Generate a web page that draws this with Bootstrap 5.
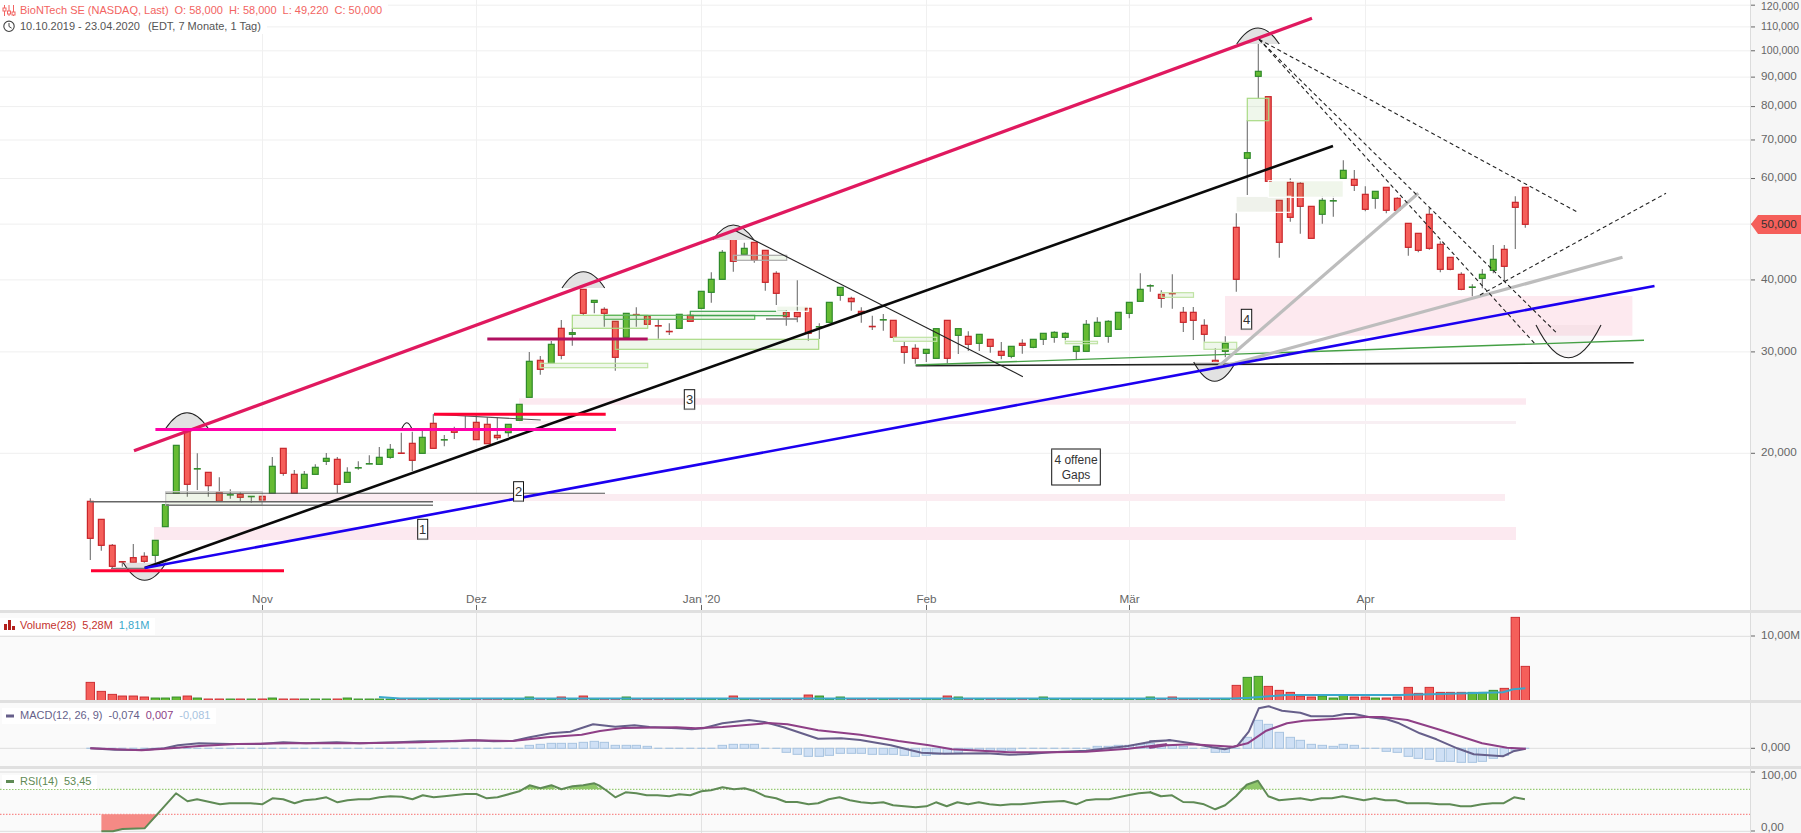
<!DOCTYPE html>
<html lang="de">
<head>
<meta charset="utf-8">
<title>BioNTech SE Chart</title>
<link href="https://cdn.jsdelivr.net/npm/bootstrap@5.3.0/dist/css/bootstrap.min.css" rel="stylesheet">
<style>
html,body{margin:0;height:833px;overflow:hidden;background:#fff;font-family:"Liberation Sans",Arial,sans-serif;font-size:11px}
.stage{width:1801px;height:833px}
.pane-main{height:610px}
.pane-vol{height:90px}
.pane-macd{height:66px}
.pane-rsi{height:67px}
.pane-sep{border-top:3px solid #e0e0e0}
.plot{width:1750px;height:100%;display:block;flex:none;background:#fff}
.plot-low{background:#fafafa}
.yaxis{width:51px;height:100%;display:block;flex:none;background:#f6f6f6}
svg text{font-family:"Liberation Sans",Arial,sans-serif;font-size:11.7px;fill:#666}
svg text.tag{font-size:13px;fill:#333}
svg text.note{font-size:12px;fill:#333}
.legend-box{position:absolute;background:#fff;white-space:nowrap;padding-right:6px}
.legend-box span+span{margin-left:6px}
.lg-red{color:#f26462}
.lg-grey{color:#555}
.legend-box span.lg-wide{margin-left:8px}
.lg-vol{color:#c4332e}
.lg-teal{color:#3aa8cc}
.lg-macd{color:#665f8a}
.lg-sig{color:#8e3f86}
.lg-hist{color:#a8c4e0}
.lg-rsi{color:#5f8a55}
.lg-ico{width:20px;flex:none}
.lg-ico-s{width:18px;flex:none}
.lg-top1{left:0;top:0;height:18px;line-height:20px}
.lg-top2{left:0;top:18px;height:16px;line-height:16px}
.lg-volpos{left:0;top:5px;height:17px;line-height:15px}
.lg-macdpos{left:2px;top:5px;height:16px;line-height:15px}
.lg-rsipos{left:2px;top:6px;height:14px;line-height:12px}
</style>
</head>
<body>
<div class="stage d-flex flex-column">
  <div class="pane-main d-flex position-relative">
    <svg id="pMain" class="plot" viewBox="0 0 1750 610"></svg>
    <svg id="aMain" class="yaxis" viewBox="1750 0 51 610"></svg>
    <div class="legend-box lg-top1 d-flex lg-red">
      <svg class="lg-ico" width="20" height="18" viewBox="0 0 20 18"><g stroke="#f26462" fill="#fff" stroke-width="1"><path d="M4.5 5v11M9 5v11M13.5 5v11" fill="none"/><rect x="3" y="8" width="3" height="3"/><rect x="7.5" y="11" width="3" height="3"/><rect x="12" y="12" width="3" height="3"/></g></svg>
      <span>BioNTech SE (NASDAQ, Last)</span><span>O: 58,000</span><span>H: 58,000</span><span>L: 49,220</span><span>C: 50,000</span>
    </div>
    <div class="legend-box lg-top2 d-flex lg-grey">
      <svg class="lg-ico" width="20" height="16" viewBox="0 0 20 16"><circle cx="9" cy="8.3" r="5.2" fill="none" stroke="#444" stroke-width="1.1"/><path d="M9 5v3.5l2.6 1.6" fill="none" stroke="#444" stroke-width="1"/></svg>
      <span>10.10.2019 - 23.04.2020</span><span class="lg-wide">(EDT, 7 Monate, 1 Tag)</span>
    </div>
  </div>
  <div class="pane-vol pane-sep d-flex position-relative">
    <svg id="pVol" class="plot plot-low" viewBox="0 613 1750 87"></svg>
    <svg id="aVol" class="yaxis" viewBox="1750 613 51 87"></svg>
    <div class="legend-box lg-volpos d-flex lg-vol">
      <svg class="lg-ico" width="20" height="15" viewBox="0 0 20 15"><g fill="#b3201c"><rect x="4" y="6" width="3" height="6"/><rect x="8" y="2" width="3" height="10"/><rect x="12" y="8" width="3" height="4"/></g></svg>
      <span>Volume(28)</span><span>5,28M</span><span class="lg-teal">1,81M</span>
    </div>
  </div>
  <div class="pane-macd pane-sep d-flex position-relative">
    <svg id="pMacd" class="plot plot-low" viewBox="0 703 1750 63"></svg>
    <svg id="aMacd" class="yaxis" viewBox="1750 703 51 63"></svg>
    <div class="legend-box lg-macdpos d-flex lg-macd">
      <svg class="lg-ico-s" width="18" height="15" viewBox="0 0 18 15"><rect x="4" y="6.5" width="8" height="3" fill="#665f8a"/></svg>
      <span>MACD(12, 26, 9)</span><span>-0,074</span><span class="lg-sig">0,007</span><span class="lg-hist">-0,081</span>
    </div>
  </div>
  <div class="pane-rsi pane-sep d-flex position-relative">
    <svg id="pRsi" class="plot plot-low" viewBox="0 769 1750 64"></svg>
    <svg id="aRsi" class="yaxis" viewBox="1750 769 51 64"></svg>
    <div class="legend-box lg-rsipos d-flex lg-rsi">
      <svg class="lg-ico-s" width="18" height="14" viewBox="0 0 18 14"><rect x="4" y="5" width="8" height="3" fill="#5f8a55"/></svg>
      <span>RSI(14)</span><span>53,45</span>
    </div>
  </div>
</div>
<script src="https://cdn.jsdelivr.net/npm/bootstrap@5.3.0/dist/js/bootstrap.bundle.min.js"></script>
<script>
const R='r',G='g';
const blocks=[
[400,[[295,304,415,480,R],[357,358,436,452,R],[432,436,499,505,R],[483,484,487,500,R],[432,473,487,505,R],[457,469,484,505,R],[421,421,466,490,G],[314,314,380,380,G],[136,136,280,280,G],[90,90,253,290,R],[160,205,208,270,G],[217,217,257,290,R],[232,277,304,304,R],[268,283,286,296,G],[277,283,292,305,R],[289,289,290,308,G],[289,289,300,318,R],[171,199,280,280,G],[145,145,220,227,R],[210,223,280,280,R],[213,223,265,265,G],[193,202,223,223,G],[159,175,184,195,G],[171,178,253,280,R],[202,217,247,247,G],[184,202,205,209,G],[166,190,193,193,G],[141,172,193,193,G],[132,148,172,176,G],[98,159,160,160,R],[95,130,181,213,R],[93,112,160,160,G],[43,70,145,145,R],[105,118,121,139,G],[80,90,97,117,R]]],
[300,[[348,387,390,390,G],[345,367,419,419,R],[352,373,431,431,R],[352,406,413,420,R],[373,373,398,410,G],[313,313,361,361,G]]],
[220,[[396,424,532,532,G],[408,421,448,464,R],[363,373,430,430,G],[300,325,406,418,R],[325,338,343,377,G],[208,208,280,285,R],[241,241,247,280,G],[262,268,280,320,R],[304,304,412,452,R],[280,280,352,352,G],[262,283,285,320,R],[285,289,313,313,R],[298,316,319,356,R],[310,334,335,345,R],[283,283,325,325,G],[283,286,304,304,R],[214,214,265,268,G],[157,178,217,248,G],[90,97,178,178,G],[40,52,124,155,R],[68,85,103,103,G],[67,67,121,128,R],[91,91,187,212,R],[154,160,220,255,R],[270,277,290,317,R],[181,277,290,307,R],[265,265,340,362,R],[310,319,322,357,G],[247,247,307,310,G]]],
[150,[[412,412,436,452,G],[440,445,455,482,R],[472,484,490,518,R],[497,529,530,540,R],[492,508,511,542,G],[511,511,562,562,R],[575,590,607,641,R],[583,595,625,641,R],[598,598,610,636,G],[536,536,625,625,G],[511,511,625,640,R],[536,536,556,612,G],[544,559,583,603,R],[553,553,580,603,G],[568,568,589,608,R],[576,604,616,628,R],[589,589,619,625,G],[568,580,586,611,R],[568,568,592,595,G],[550,550,568,585,G],[544,547,562,578,G],[547,550,562,571,G],[589,589,604,628,G],[510,523,604,604,G],[502,517,559,559,G],[511,514,559,578,G],[487,487,538,538,G],[457,457,490,505,G],[370,418,454,454,G],[403,406,409,425,G],[421,433,445,473,R],[373,430,431,476,R]]],
[250,[[171,187,217,246,R],[171,187,211,270,R],[208,226,253,275,R],[295,331,343,343,R],[259,280,304,322,G]]],
[20,[[580,622,778,815,R],[300,398,415,525,G],[60,154,169,235,G],[230,230,484,484,R],[541,541,667,713,R],[475,487,592,605,R],[487,490,559,641,R],[559,559,655,655,R],[530,541,583,611,G],[530,541,544,590,G],[421,451,475,475,G],[450,478,496,513,R],[499,523,568,574,R],[514,514,535,566,G],[502,502,571,580,R],[532,535,571,571,R],[610,610,682,707,R],[640,640,691,697,R],[565,583,685,689,R],[664,673,748,757,R],[712,712,748,751,R],[757,763,808,811,R],[793,801,802,829,G],[747,763,775,805,G],[675,718,751,760,G],[675,688,739,785,R],[529,547,562,687,R],[502,502,613,623,R]]]
];
const candles=[];
blocks.forEach(([y0,rows])=>rows.forEach(r=>candles.push([y0+r[0]/3,y0+r[1]/3,y0+r[2]/3,y0+r[3]/3,r[4]])));
const cx=i=>Math.round(90.3+10.709*i)+0.3;
const vlines=[262.5,476.5,701.5,926.5,1129.5,1365.5];
const FILL={r:'#f55f5a',g:'#66bb33'},STK={r:'#c8252a',g:'#2f8a2a'};
const L=(x1,y1,x2,y2,c,w,extra='')=>`<line x1="${x1}" y1="${y1}" x2="${x2}" y2="${y2}" stroke="${c}" stroke-width="${w}" ${extra}/>`;
const rect=(x,y,w,h,f,s='none',sw=1)=>`<rect x="${x}" y="${y}" width="${w}" height="${h}" fill="${f}" stroke="${s}" stroke-width="${sw}"/>`;
const poly=(pts,c,w)=>`<polyline points="${pts.map(p=>p[0].toFixed(1)+','+p[1].toFixed(1)).join(' ')}" fill="none" stroke="${c}" stroke-width="${w}" stroke-linejoin="round"/>`;
const pyY=p=>453.3-250.1*Math.log(p/20);
const axisLine=(y1,y2)=>L(1750.5,y1,1750.5,y2,'#dcdcdc',1);

/* ---- main pane ---- */
let m='';
[120,110,100,90,80,70,60,50,40,30,20].forEach(p=>{const y=pyY(p).toFixed(1);m+=L(0,y,1750,y,'#efefef',1)});
vlines.forEach(x=>m+=L(x,0,x,605,'#f0f0f0',1)+L(x,605,x,610,'#666',1));
/* pink gaps */
const pink='#fce9f0';
m+=rect(154,527,1362,13,pink)+rect(262,494,1243,7,'#fbecf1')+rect(519,398.3,1007,6.4,pink)+rect(519,421,997,3,'#f8eff3')+rect(1225,296,407.4,39.7,'#fde9ef');
/* candles */
candles.forEach((c,i)=>{const x=cx(i);
  m+=L(x,c[0],x,c[3],'#707070',1.1);
  const h=Math.max(c[2]-c[1],.4);
  if(h<1.6) m+=L(x-3.5,c[1]+h/2,x+3.5,c[1]+h/2,STK[c[4]],1.6);
  else m+=rect(x-2.9,c[1],5.8,h,FILL[c[4]],STK[c[4]],1.2);
});
/* gap boxes */
const gb=(x1,y1,x2,y2,s,f='rgba(110,180,70,.11)',w=1.2)=>rect(x1,y1,x2-x1,y2-y1,f,s,w);
const lg='#a9da84';
m+=gb(165.7,491.7,262.3,505.3,'#ccc','rgba(120,170,70,.12)');
m+=gb(572.3,315.3,647.7,328.3,lg)+gb(540.3,363.3,647.7,367.7,'#bfe3a3')+gb(615.3,339.3,818.7,349.3,lg)+gb(604.3,315.3,754.7,319.3,'#5ab35a')+gb(690.3,311.3,786.3,315.7,'#3da24d');
m+=gb(733.3,255.3,786.7,260.3,'#aaa')+gb(776.7,306,808.3,311.3,'#fff','rgba(110,180,70,.1)');
m+=gb(893.5,337.3,936.8,341.3,'#bfe3a3')+gb(1065.3,341.3,1097.5,343.7,'#bfe3a3')+gb(1161.4,292.7,1193.5,297.3,'#bfe3a3')+gb(1204,342.3,1236.7,349.3,'#bfe3a3');
m+=gb(1247.3,98.3,1268.7,120.7,lg)+gb(1236,196.3,1290.7,212.3,'#fff','rgba(120,150,90,.12)')+gb(1268.3,180.7,1343.3,197.3,'#fff','rgba(120,170,70,.11)');
/* arcs */
const arc=(x1,y,x2,yc,f='#e2e2e2')=>{const c=2*yc-y;return `<path d="M${x1} ${y}Q${(x1+x2)/2} ${c} ${x2} ${y}" fill="${f}" stroke="#222" stroke-width="1.1"/>`};
m+=arc(123.3,562.7,166,580.3)+arc(165.7,428.5,208.3,412.7)+arc(401.3,430,412.3,422.7,'none')+arc(562,288,604.7,271.7)+arc(712.7,240,754,225)+arc(1236.7,44,1279.3,28)+arc(1193.7,362,1235.7,381.3)+arc(1536,325,1601,357.7,'rgba(190,160,170,.09)');
/* horizontal grey lines */
m+=L(90,501.7,433,501.7,'#666',1.4)+L(165.7,505.3,433,505.3,'#777',1.4)+L(165.7,493.3,605,493.3,'#555',1.1)+L(433.6,414.3,540.7,420,'#555',1.1)+L(766,319,797,319,'#777',1.5)+L(111,568.5,145,568.5,'#777',1.5);
/* trend lines */
m+=L(915.7,365.6,1633.7,362.7,'#222',1.6)+L(915.7,365,1644,340.3,'#45a045',1.4)+L(734,230,1022.9,376.7,'#222',1.1);
m+=L(1216.4,368.3,1418.3,193.3,'#bdbdbd',3.2)+L(1216.4,368.3,1622.5,257.3,'#bdbdbd',3.2);
m+=L(144.7,568,1333,146,'#0a0a0a',2.6)+L(144.7,568,1654.5,286,'#1c00f0',2.6);
m+=L(134,450.7,1312,18.3,'#e0195f',3.3)+L(91,570.7,284,570.7,'#ff0033',3)+L(155.4,429.5,616,429.5,'#ff00a8',3)+L(434,414.3,605.7,414.3,'#ff0033',3)+L(487.3,339,647.7,339,'#b01060',3);
const dash='stroke-dasharray="4 3"';
m+=L(1259,39.3,1578.5,212.7,'#222',1.1,dash)+L(1259,39.3,1558,334.3,'#222',1.1,dash)+L(1259,39.3,1536,345,'#222',1.1,dash)+L(1480,295,1666,193.3,'#222',1.1,dash);
/* text boxes */
const tb=(x1,y1,x2,y2,t)=>rect(x1,y1,x2-x1,y2-y1,'#fff','#111',1)+L(x1,y2,x2,y2,'#888',1.5)+`<text class="tag" x="${(x1+x2)/2}" y="${(y1+y2)/2+4.6}" text-anchor="middle">${t}</text>`;
m+=tb(417.7,519.3,427.7,539.3,'1')+tb(513.6,481.7,523.5,501.3,'2')+tb(684.3,389.7,694.7,409.3,'3')+tb(1241.3,309.3,1251.7,329.3,'4');
m+=rect(1051.7,449,48.6,36,'#fff','#111',1)+L(1051.7,449,1100.3,449,'#888',1.5)+'<text class="note" x="1076" y="463.5" text-anchor="middle">4 offene</text><text class="note" x="1076" y="479" text-anchor="middle">Gaps</text>';
/* x labels */
[[262.5,'Nov'],[476.5,'Dez'],[701.5,"Jan '20"],[926.5,'Feb'],[1129.5,'Mär'],[1365.5,'Apr']].forEach(([x,t])=>m+=`<text x="${x}" y="603" text-anchor="middle">${t}</text>`);
pMain.innerHTML=m;
/* main axis */
let a=axisLine(0,610);
[[120,'120,000'],[110,'110,000'],[100,'100,000'],[90,'90,000'],[80,'80,000'],[70,'70,000'],[60,'60,000'],[50,''],[40,'40,000'],[30,'30,000'],[20,'20,000']].forEach(([p,t])=>{const y=pyY(p);a+=L(1751,y,1755,y,'#666',1);if(t)a+=`<text x="1761" y="${Math.max(y+2.8,9.6).toFixed(1)}"${t.length>6?' textLength="38" lengthAdjust="spacingAndGlyphs"':''}>${t}</text>`});
a+='<polygon points="1751,224.3 1758,215 1801,215 1801,234 1758,234" fill="#f55f5a"/><text x="1761" y="228.3" style="fill:#333">50,000</text>';
aMain.innerHTML=a;

/* ---- volume ---- */
const vol={};
[247,274,283,288,288,291,294,294,291,288,294].forEach((z,i)=>vol[i]=z);
Object.assign(vol,{17:294,24:294,41:291,44:291,46:288,50:291,60:288,67:285,68:288,70:291,80:288,81:291,89:291,99:291,101:291});
[256,232,229,259,271,277,288,291,288,294,285,291,291,294,294,291,262,280,262,277,277,277,277,277,271,265,52,199].forEach((z,i)=>vol[107+i]=z);
let v='';
vlines.forEach(x=>v+=L(x,613,x,700,'#e2e2e2',1));
v+=L(0,636.3,1750,636.3,'#dedede',1);
candles.forEach((c,i)=>{const y=600+(vol[i]||297)/3;v+=rect(cx(i)-4.2,y,8.4,700.5-y,FILL[c[4]],STK[c[4]],.9)});
const xz3=x=>x/2.6133,xz8=x=>600+x/2.6133,xz7=x=>1150+x/2.4086,yz=z=>600+z/3;
const pts=(f,a)=>a.map(p=>[f(p[0]),yz(p[1])]);
v+=poly([[379,697],[400,698.4],[1233,698.4]].concat(pts(xz7,[[240,293],[330,285],[600,285],[700,282],[850,277],[875,268],[904,265]])),'#3aa8cc',2);
pVol.innerHTML=v;
aVol.innerHTML=axisLine(613,700)+L(1751,636,1755,636,'#666',1)+'<text x="1761" y="639">10,00M</text>';

/* ---- MACD ---- */
const h={};
for(let i=0;i<41;i++)h[i]=i>7?443:445;
Object.assign(h,{41:436,42:433,43:430,44:430,45:430,46:427,47:424,48:427,49:436,50:436,51:436,52:439,53:445,54:447,55:447,56:445,57:445,58:442,59:436,60:433,61:433,62:433,63:442,64:448,65:457,66:463,67:469,68:469,69:466,70:460,71:460,72:460,73:463,74:463,75:463,76:466,77:469,78:466,79:463,80:460,81:457,82:451,83:451,84:451,85:451,86:451,87:448,88:445,89:445,90:445,91:442,92:445,93:442,94:439,95:439,96:436,97:436,98:433,99:430,100:433,101:436,102:439,103:442,104:448,105:457,106:457,107:445,108:412,109:361,110:373,111:397,112:412,113:421,114:433,115:436,116:439,117:433,118:436,119:445,120:445,121:454,122:457,123:469,124:475,125:478,126:484,127:484,128:487,129:487,130:484,131:475,132:466,133:451,134:445});
let d='';
vlines.forEach(x=>d+=L(x,703,x,766,'#e2e2e2',1));
d+=L(0,748.3,1750,748.3,'#dedede',1);
candles.forEach((c,i)=>{const y=yz(h[i]),t=Math.min(y,748.3),hh=Math.abs(y-748.3);d+=hh<1.2?L(cx(i)-4,748.3,cx(i)+4,748.3,'#a8c4e0',1.2):rect(cx(i)-4.2,t,8.4,hh,'#cfe0f5','#a8c4e0',1)});
const macd=pts(xz3,[[236,445],[300,449],[370,450],[430,445],[465,436],[520,430],[600,432],[680,432],[740,427],[800,430],[880,427],[940,430],[1040,427],[1100,424],[1190,424],[1240,421],[1290,424],[1340,423],[1384,412],[1440,400],[1490,395],[1550,373]]).concat(pts(xz8,[[40,380],[90,376],[130,381],[200,385],[240,388],[270,385],[320,370],[390,360],[430,366],[480,382],[570,416],[630,415],[680,420],[760,436],[840,458],[900,461],[1010,460],[1070,464],[1120,462],[1180,457],[1270,452],[1380,438],[1440,425],[1490,421]]),pts(xz7,[[0,424],[50,421],[100,430],[150,442],[180,448],[210,438],[238,395],[262,325],[286,319],[318,332],[362,338],[388,349],[440,349],[470,342],[492,342],[530,352],[570,358],[600,370],[650,400],[690,418],[740,445],[780,463],[850,469],[875,454],[905,446]]));
const sig=pts(xz3,[[236,445],[370,451],[430,446],[520,438],[620,432],[760,430],[940,430],[1100,427],[1230,421],[1340,423],[1430,412],[1520,404]]).concat(pts(xz8,[[0,393],[60,384],[200,382],[250,385],[320,381],[440,369],[490,373],[570,391],[680,404],[780,423],[860,436],[920,448],[1070,457],[1180,457],[1270,455],[1380,446],[1480,433]]),pts(xz7,[[0,443],[40,436],[100,433],[200,440],[235,430],[280,392],[330,370],[370,362],[440,357],[520,351],[560,351],[620,360],[700,390],[800,430],[860,443],[905,446]]));
d+=poly(macd,'#665f8a',2)+poly(sig,'#8e3f86',2);
pMacd.innerHTML=d;
aMacd.innerHTML=axisLine(703,766)+L(1751,748.3,1755,748.3,'#666',1)+'<text x="1761" y="751">0,000</text>';

/* ---- RSI ---- */
let r='';
vlines.forEach(x=>r+=L(x,769,x,833,'#e2e2e2',1));
r+=L(0,772,1750,772,'#dedede',1)+L(0,831.3,1750,831.3,'#dedede',1);
r+=L(0,789.3,1750,789.3,'#7fc050',1,'stroke-dasharray="1.5 1.5"')+L(0,814.3,1750,814.3,'#f87070',1,'stroke-dasharray="1.5 1.5"');
const fillP=(f,a,c)=>`<polygon points="${pts(f,a).map(p=>p[0].toFixed(1)+','+p[1].toFixed(1)).join(' ')}" fill="${c}"/>`;
r+=fillP(xz3,[[265,643],[415,643],[378,685],[320,687],[295,694],[265,694]],'#f58a85');
r+=fillP(xz3,[[1368,568],[1384,556],[1412,565],[1441,556],[1452,568],[1485,568],[1496,559],[1524,556],[1553,550],[1568,568]],'#8fc76a');
r+=fillP(xz8,[[-4,568],[0,558],[12,568]],'#8fc76a');
r+=fillP(xz7,[[215,568],[233,554],[260,542],[272,568]],'#8fc76a');
const rsi=pts(xz3,[[265,694],[295,694],[320,687],[378,685],[460,580],[490,604],[515,598],[575,613],[600,610],[655,610],[685,613],[712,595],[740,598],[770,610],[795,601],[825,598],[853,592],[882,607],[908,601],[937,598],[965,598],[992,592],[1020,589],[1050,590],[1078,598],[1105,586],[1133,592],[1161,589],[1216,582],[1245,582],[1272,595],[1300,592],[1357,574],[1384,556],[1412,565],[1441,556],[1467,568],[1496,559],[1524,556],[1553,550]]).concat(pts(xz8,[[0,558],[15,570],[40,592],[67,577],[95,580],[122,586],[150,586],[181,589],[207,583],[236,586],[265,574],[290,571],[320,562],[350,568],[378,565],[405,574],[432,589],[460,595],[486,606],[515,606],[545,613],[570,610],[598,598],[626,592],[653,601],[682,607],[710,610],[740,607],[766,616],[795,619],[825,622],[853,619],[878,607],[906,619],[934,607],[962,613],[990,607],[1018,613],[1046,616],[1074,613],[1100,613],[1160,606],[1212,603],[1245,613],[1270,601],[1296,598],[1330,598],[1380,586],[1408,580],[1440,577],[1465,589]]),pts(xz7,[[0,577],[27,589],[53,586],[80,606],[105,607],[130,613],[157,628],[181,616],[207,589],[233,554],[260,542],[285,589],[311,601],[362,595],[388,601],[413,595],[438,595],[464,589],[515,601],[541,595],[567,601],[592,601],[619,610],[670,610],[696,613],[722,613],[748,619],[773,619],[799,613],[825,610],[851,610],[877,592],[903,598]]));
r+=poly(rsi,'#5f8a55',2);
pRsi.innerHTML=r;
aRsi.innerHTML=axisLine(769,833)+L(1751,772,1755,772,'#666',1)+L(1751,831,1755,831,'#666',1)+'<text x="1761" y="778.5">100,00</text><text x="1761" y="831">0,00</text>';
</script>
</body>
</html>
